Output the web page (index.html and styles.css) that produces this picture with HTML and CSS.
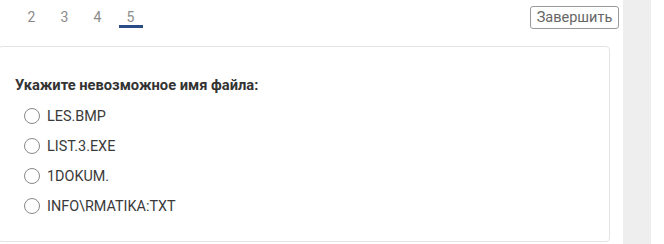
FILE: index.html
```html
<!DOCTYPE html>
<html lang="ru">
<head>
    <meta charset="UTF-8">
    <title>Тест</title>
    <link rel="stylesheet" href="styles.css">
</head>
<body>
    <div class="page">
        <div class="main">
            <!-- Навигация по вопросам -->
            <div class="topbar">
                <div class="pages">
                    <span class="num">2</span>
                    <span class="num">3</span>
                    <span class="num">4</span>
                    <span class="num active">5</span>
                </div>
                <button class="finish">Завершить</button>
            </div>

            <!-- Вопрос -->
            <div class="card">
                <div class="question">Укажите невозможное имя файла:</div>
                <label class="option"><span class="radio"></span>LES.BMP</label>
                <label class="option"><span class="radio"></span>LIST.3.EXE</label>
                <label class="option"><span class="radio"></span>1DOKUM.</label>
                <label class="option"><span class="radio"></span>INFO\RMATIKA:TXT</label>
            </div>
        </div>
        <div class="side"></div>
    </div>
</body>
</html>
```
FILE: styles.css
```css
body {
    margin: 0;
    font-family: Roboto, "Liberation Sans", sans-serif;
    background: #fff;
    color: #333;
}
.page {
    display: flex;
    height: 244px;
    overflow: hidden;
}
.main {
    width: 623px;
}
.side {
    width: 28px;
    background: #eeeeee;
}
.topbar {
    display: flex;
    justify-content: space-between;
    align-items: flex-start;
    height: 46px;
    padding-right: 4px;
}
.pages {
    display: flex;
    padding-left: 15px;
}
.num {
    width: 33px;
    text-align: center;
    font-size: 14px;
    color: #8a8a8a;
    line-height: 16px;
    padding-top: 9px;
    height: 19px;
}
.num.active {
    position: relative;
}
.num.active::after {
    content: "";
    position: absolute;
    left: 5px;
    right: 4px;
    bottom: 0;
    height: 3px;
    background: #2b4b86;
}
.finish {
    margin-top: 6px;
    height: 23px;
    width: 89px;
    padding: 0;
    font-family: inherit;
    font-size: 14.5px;
    color: #666;
    background: #fff;
    border: 1px solid #999;
    border-radius: 3px;
}
.card {
    margin-left: -2px;
    margin-right: 13px;
    height: 196px;
    border: 1px solid #e3e3e3;
    border-radius: 4px;
    padding: 29px 0 0 16px;
    box-sizing: border-box;
}
.question {
    font-size: 14.7px;
    font-weight: bold;
    color: #333;
    line-height: 18px;
    margin-bottom: 7px;
}
.option {
    display: flex;
    align-items: center;
    height: 30px;
    font-size: 14.4px;
    color: #3a3a3a;
    padding-left: 9px;
}
.radio {
    width: 14px;
    height: 14px;
    border: 1px solid #888;
    border-radius: 50%;
    margin-right: 7px;
}
```
